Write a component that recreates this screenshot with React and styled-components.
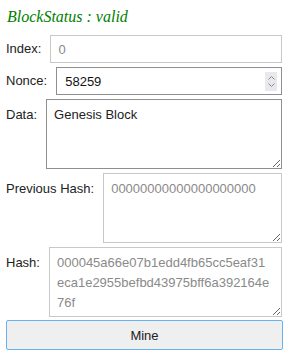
import React from "react";
import styled, {createGlobalStyle, css} from "styled-components";

const GlobalStyle = createGlobalStyle`
    body {
        margin: 0;
        background: #fff;
        font-family: "Liberation Sans", Arial, sans-serif;
    }
`;

const Panel = styled.div`
    padding: 8px 11px 12px 6px;
`;

const Status = styled.div`
    margin: 0 0 9px 1px;
    font-family: "Liberation Serif", "Times New Roman", serif;
    font-style: italic;
    font-size: 16px;
    line-height: 18px;
    color: #008000;
`;

const Form = styled.div`
    display: flex;
    flex-direction: column;
    gap: 4px;
`;

const Row = styled.div`
    display: flex;
    align-items: center;
    gap: 9px;
    padding-right: 1px;
    ${props => props.multi && css`
        align-items: flex-start;
    `};
`;

const Label = styled.label`
    flex: none;
    font-size: 13px;
    line-height: 20px;
    color: #222;
    ${props => props.multi && css`
        padding-top: 6px;
    `};
`;

const fieldBase = css`
    box-sizing: border-box;
    margin: 0;
    font-family: "Liberation Sans", Arial, sans-serif;
    font-size: 13px;
    background: #fff;
    outline: none;
    border-radius: 0;
`;

const TextInput = styled.input`
    ${fieldBase};
    flex: 1;
    min-width: 0;
    height: 28px;
    padding: 0 8px 0 7px;
    border: 1px solid #c8c8c8;
    color: #8a8a8a;
`;

const NumberBox = styled.div`
    box-sizing: border-box;
    flex: 1;
    min-width: 0;
    height: 28px;
    display: flex;
    align-items: center;
    border: 1px solid #8f8f8f;
    padding-right: 4px;
`;

const NumberInput = styled.input`
    ${fieldBase};
    flex: 1;
    min-width: 0;
    height: 100%;
    border: none;
    padding: 0 0 0 8px;
    color: #111;
`;

const Spinner = styled.span`
    flex: none;
    width: 12px;
    height: 19px;
    display: flex;
    flex-direction: column;
    align-items: center;
    justify-content: center;
    gap: 3px;
    background: #e9e9ed;
`;

const TextArea = styled.textarea`
    ${fieldBase};
    flex: 1;
    min-width: 0;
    height: 70px;
    padding: 5px 10px 5px 7px;
    line-height: 20px;
    border: 1px solid ${props => props.disabled ? "#c8c8c8" : "#8f8f8f"};
    color: ${props => props.disabled ? "#8a8a8a" : "#222"};
    word-break: break-all;
`;

const MineButton = styled.button`
    box-sizing: border-box;
    margin-top: -1px;
    height: 30px;
    width: 100%;
    border: 1px solid #66b3ef;
    border-radius: 2px;
    background: #efefef;
    font-family: "Liberation Sans", Arial, sans-serif;
    font-size: 13px;
    color: #222;
`;

const Chevron = ({down}) => (
    <svg width="7" height="4" viewBox="0 0 7 4">
        <path
            d={down ? "M0.5 0.5 L3.5 3.5 L6.5 0.5" : "M0.5 3.5 L3.5 0.5 L6.5 3.5"}
            fill="none"
            stroke="#8a8a8a"
            strokeWidth="1"
        />
    </svg>
);

const MultiRow = ({label, value, disabled}) => (
    <Row multi>
        <Label multi>{label}</Label>
        <TextArea value={value} disabled={disabled} readOnly/>
    </Row>
);

const hash = "000045a66e07b1edd4fb65cc5eaf31eca1e2955befbd43975bff6a392164e76f";

export default function App() {
    return (
        <Panel>
            <GlobalStyle/>
            <Status>BlockStatus : valid</Status>
            <Form>
                <Row>
                    <Label>Index:</Label>
                    <TextInput value="0" disabled readOnly/>
                </Row>
                <Row>
                    <Label>Nonce:</Label>
                    <NumberBox>
                        <NumberInput value="58259" readOnly/>
                        <Spinner>
                            <Chevron/>
                            <Chevron down/>
                        </Spinner>
                    </NumberBox>
                </Row>
                <MultiRow label="Data:" value="Genesis Block"/>
                <MultiRow label="Previous Hash:" value={"0".repeat(20)} disabled/>
                <MultiRow label="Hash:" value={hash} disabled/>
                <MineButton>Mine</MineButton>
            </Form>
        </Panel>
    );
}
